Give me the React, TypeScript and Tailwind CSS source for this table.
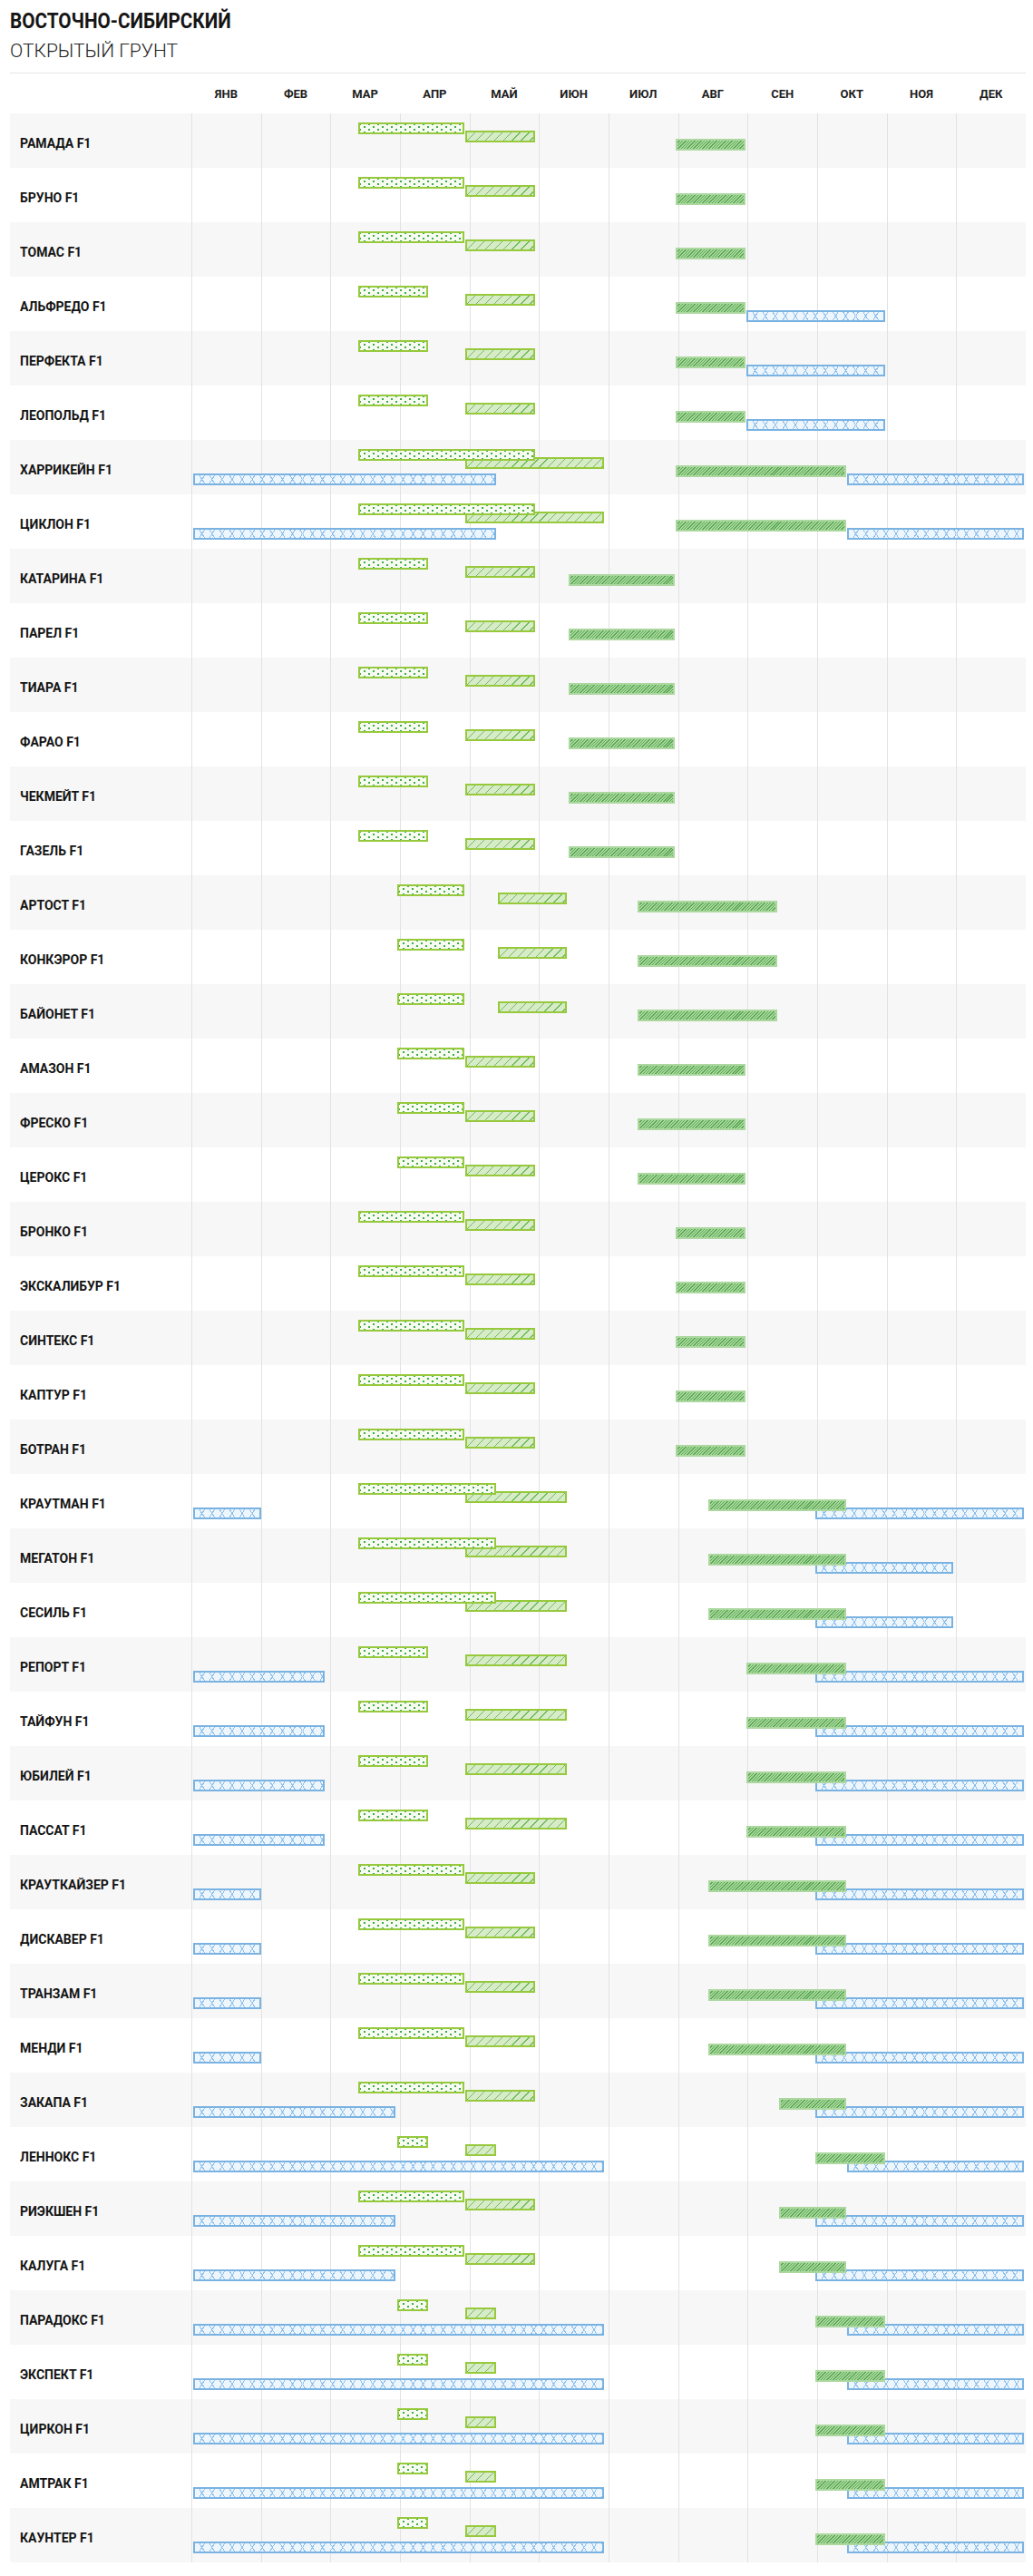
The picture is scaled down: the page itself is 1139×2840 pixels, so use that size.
import React from "react";

type Kind = "s" | "p" | "h" | "b";
type Bar = [Kind, number, number];

const CUM = [0, 31, 59, 90, 120, 151, 181, 212, 243, 273, 304, 334, 365];
const D = (m: number, d: number) => CUM[m - 1] + d - 1;
const E = (m: number) => CUM[m];

const MONTHS = ["ЯНВ", "ФЕВ", "МАР", "АПР", "МАЙ", "ИЮН", "ИЮЛ", "АВГ", "СЕН", "ОКТ", "НОЯ", "ДЕК"];

const P: Record<string, Bar[]> = {
  A: [["s", D(3, 15), E(4)], ["p", D(5, 1), E(5)], ["h", D(8, 1), E(8)]],
  B: [["s", D(3, 15), D(4, 15)], ["p", D(5, 1), E(5)], ["h", D(8, 1), E(8)], ["b", D(9, 1), E(10)]],
  C: [
    ["s", D(3, 15), E(5)],
    ["p", D(5, 1), E(6)],
    ["h", D(8, 1), D(10, 15)],
    ["b", D(10, 15), E(12)],
    ["b", D(1, 1), D(5, 15)],
  ],
  D: [["s", D(3, 15), D(4, 15)], ["p", D(5, 1), E(5)], ["h", D(6, 15), E(7)]],
  E: [["s", D(4, 1), E(4)], ["p", D(5, 15), D(6, 15)], ["h", D(7, 15), D(9, 15)]],
  F: [["s", D(4, 1), E(4)], ["p", D(5, 1), E(5)], ["h", D(7, 15), E(8)]],
  H: [
    ["s", D(3, 15), D(5, 15)],
    ["p", D(5, 1), D(6, 15)],
    ["h", D(8, 15), D(10, 15)],
    ["b", D(10, 1), E(12)],
    ["b", D(1, 1), E(1)],
  ],
  I: [
    ["s", D(3, 15), D(5, 15)],
    ["p", D(5, 1), D(6, 15)],
    ["h", D(8, 15), D(10, 15)],
    ["b", D(10, 1), E(11)],
  ],
  J: [
    ["s", D(3, 15), D(4, 15)],
    ["p", D(5, 1), D(6, 15)],
    ["h", D(9, 1), D(10, 15)],
    ["b", D(10, 1), E(12)],
    ["b", D(1, 1), E(2)],
  ],
  K: [
    ["s", D(3, 15), E(4)],
    ["p", D(5, 1), E(5)],
    ["h", D(8, 15), D(10, 15)],
    ["b", D(10, 1), E(12)],
    ["b", D(1, 1), E(1)],
  ],
  L: [
    ["s", D(3, 15), E(4)],
    ["p", D(5, 1), E(5)],
    ["h", D(9, 15), D(10, 15)],
    ["b", D(10, 1), E(12)],
    ["b", D(1, 1), E(3)],
  ],
  M: [
    ["s", D(4, 1), D(4, 15)],
    ["p", D(5, 1), D(5, 15)],
    ["h", D(10, 1), E(10)],
    ["b", D(10, 15), E(12)],
    ["b", D(1, 1), E(6)],
  ],
};

const ROWS: [string, string][] = [
  ["РАМАДА F1", "A"],
  ["БРУНО F1", "A"],
  ["ТОМАС F1", "A"],
  ["АЛЬФРЕДО F1", "B"],
  ["ПЕРФЕКТА F1", "B"],
  ["ЛЕОПОЛЬД F1", "B"],
  ["ХАРРИКЕЙН F1", "C"],
  ["ЦИКЛОН F1", "C"],
  ["КАТАРИНА F1", "D"],
  ["ПАРЕЛ F1", "D"],
  ["ТИАРА F1", "D"],
  ["ФАРАО F1", "D"],
  ["ЧЕКМЕЙТ F1", "D"],
  ["ГАЗЕЛЬ F1", "D"],
  ["АРТОСТ F1", "E"],
  ["КОНКЭРОР F1", "E"],
  ["БАЙОНЕТ F1", "E"],
  ["АМАЗОН F1", "F"],
  ["ФРЕСКО F1", "F"],
  ["ЦЕРОКС F1", "F"],
  ["БРОНКО F1", "A"],
  ["ЭКСКАЛИБУР F1", "A"],
  ["СИНТЕКС F1", "A"],
  ["КАПТУР F1", "A"],
  ["БОТРАН F1", "A"],
  ["КРАУТМАН F1", "H"],
  ["МЕГАТОН F1", "I"],
  ["СЕСИЛЬ F1", "I"],
  ["РЕПОРТ F1", "J"],
  ["ТАЙФУН F1", "J"],
  ["ЮБИЛЕЙ F1", "J"],
  ["ПАССАТ F1", "J"],
  ["КРАУТКАЙЗЕР F1", "K"],
  ["ДИСКАВЕР F1", "K"],
  ["ТРАНЗАМ F1", "K"],
  ["МЕНДИ F1", "K"],
  ["ЗАКАПА F1", "L"],
  ["ЛЕННОКС F1", "M"],
  ["РИЭКШЕН F1", "L"],
  ["КАЛУГА F1", "L"],
  ["ПАРАДОКС F1", "M"],
  ["ЭКСПЕКТ F1", "M"],
  ["ЦИРКОН F1", "M"],
  ["АМТРАК F1", "M"],
  ["КАУНТЕР F1", "M"],
];

const TL = 920;
const S = TL / 365;
const ORDER: Record<Kind, number> = { b: 0, h: 1, p: 2, s: 3 };

const KIND_CLASS: Record<Kind, string> = {
  s: "top-[10px] border-2 border-[#97c93c] bg-[#f7fbf2] [background-image:radial-gradient(circle,#3fae4a_0.75px,transparent_1.05px),radial-gradient(circle,#3fae4a_0.75px,transparent_1.05px)] [background-size:10px_6px] [background-position:0_0,5px_3px]",
  p: "top-[19px] border-2 border-[#97c93c] [background-image:repeating-linear-gradient(135deg,#d7ebc9_0px,#d7ebc9_6px,#6fbd5b_6px,#6fbd5b_7px)]",
  h: "top-[28px] border-2 border-[#acd8a0] [background-image:repeating-linear-gradient(135deg,#a9d79c_0px,#a9d79c_1.4px,#5aa955_1.4px,#5aa955_2.4px)]",
  b: "top-[37px] border-2 border-[#7ab3e2] bg-[#eef6fd] [background-image:repeating-linear-gradient(58deg,transparent_0px,transparent_8.4px,#8dbfea_8.4px,#8dbfea_9.4px),repeating-linear-gradient(122deg,transparent_0px,transparent_8.4px,#8dbfea_8.4px,#8dbfea_9.4px)]",
};

function BarEl({ bar }: { bar: Bar }) {
  const [k, a, b] = bar;
  let left = a * S;
  const right = b * S - 1.5;
  if (left < 2) left = 2;
  return (
    <div
      className={"absolute h-[13px] " + KIND_CLASS[k]}
      style={{ left: left, width: right - left }}
    />
  );
}

const ROBO = "font-['Roboto',sans-serif]";

export default function App() {
  return (
    <div className="w-[1139px] bg-white pl-[11px] pr-[8px] pt-[12px] pb-[15px] text-[#161616]">
      <div className={ROBO + " text-[23px] leading-[23px] font-bold"}>
        <span className="inline-block origin-left scale-x-[0.9] whitespace-nowrap">ВОСТОЧНО-СИБИРСКИЙ</span>
      </div>
      <div className={ROBO + " mt-[11px] text-[21px] leading-[21px] font-light text-[#222]"}>ОТКРЫТЫЙ ГРУНТ</div>
      <div className="mt-[13px] h-px bg-[#e6e6e6]" />
      <div className="flex h-[44px]">
        <div className="w-[200px] shrink-0" />
        <div className="grid flex-1 grid-cols-12">
          {MONTHS.map((m) => (
            <div
              key={m}
              className={ROBO + " pt-[16px] text-center text-[13px] leading-[13px] font-bold text-[#1d1d1d]"}
            >
              {m}
            </div>
          ))}
        </div>
      </div>
      <div className="flex flex-col">
        {ROWS.map(([name, prof], i) => {
          const bars = [...P[prof]].sort((x, y) => ORDER[x[0]] - ORDER[y[0]]);
          return (
            <div key={name} className={"flex h-[60px] " + (i % 2 === 0 ? "bg-[#f7f7f7]" : "bg-white")}>
              <div className={ROBO + " w-[200px] shrink-0 pl-[11px] pt-[26px] text-[14px] leading-[14px] font-bold whitespace-nowrap text-[#141414]"}>
                {name}
              </div>
              <div className="relative flex-1">
                <div className="grid h-full grid-cols-12">
                  {MONTHS.map((m) => (
                    <div key={m} className="border-l border-[#e2e2e2]" />
                  ))}
                </div>
                {bars.map((b, j) => (
                  <BarEl key={j} bar={b} />
                ))}
              </div>
            </div>
          );
        })}
      </div>
    </div>
  );
}
